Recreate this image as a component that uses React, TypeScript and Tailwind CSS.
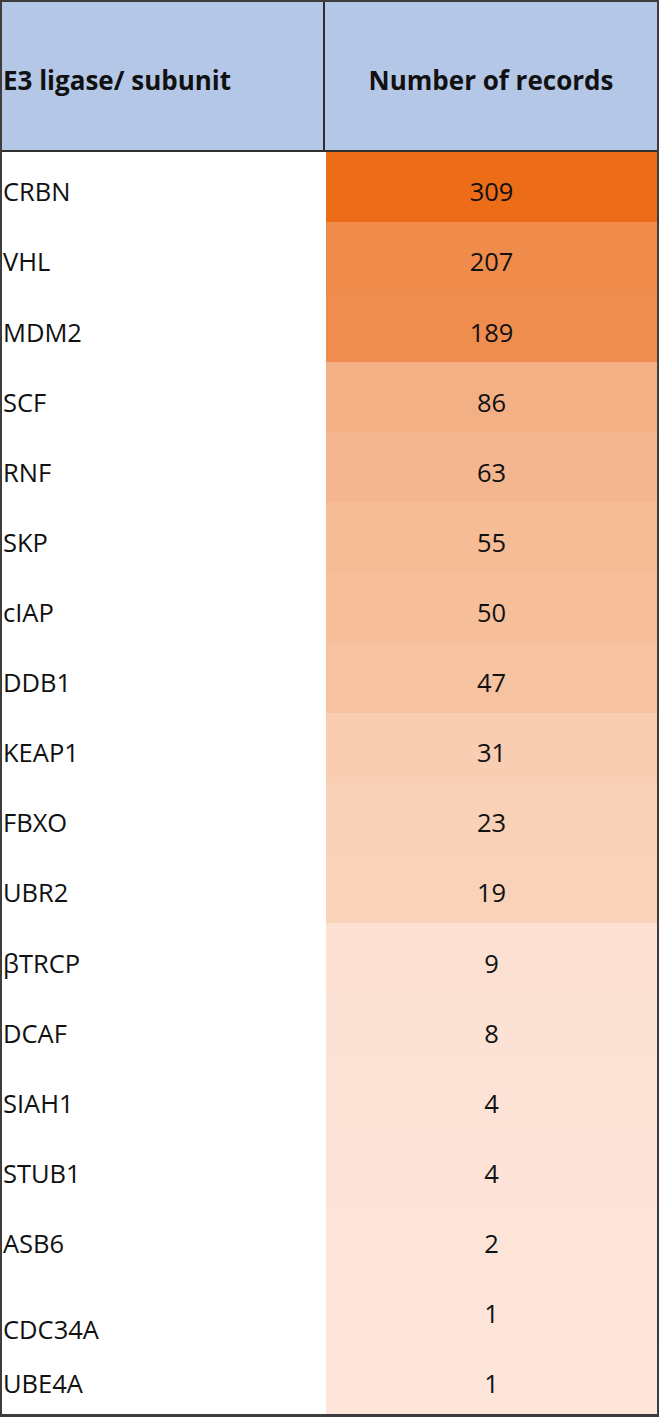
const rows: { name: string; count: number; bg: string }[] = [
  { name: "CRBN", count: 309, bg: "bg-[#ec6c17]" },
  { name: "VHL", count: 207, bg: "bg-[#ef8b4b]" },
  { name: "MDM2", count: 189, bg: "bg-[#ef8d4e]" },
  { name: "SCF", count: 86, bg: "bg-[#f3b085]" },
  { name: "RNF", count: 63, bg: "bg-[#f4b68e]" },
  { name: "SKP", count: 55, bg: "bg-[#f5bc96]" },
  { name: "cIAP", count: 50, bg: "bg-[#f6bf9a]" },
  { name: "DDB1", count: 47, bg: "bg-[#f6c29f]" },
  { name: "KEAP1", count: 31, bg: "bg-[#f8cdb1]" },
  { name: "FBXO", count: 23, bg: "bg-[#f9d1b6]" },
  { name: "UBR2", count: 19, bg: "bg-[#f9d3b9]" },
  { name: "βTRCP", count: 9, bg: "bg-[#fce1d3]" },
  { name: "DCAF", count: 8, bg: "bg-[#fce2d5]" },
  { name: "SIAH1", count: 4, bg: "bg-[#fce3d6]" },
  { name: "STUB1", count: 4, bg: "bg-[#fde3d7]" },
  { name: "ASB6", count: 2, bg: "bg-[#fde4d8]" },
  { name: "CDC34A", count: 1, bg: "bg-[#fde4d9]" },
  { name: "UBE4A", count: 1, bg: "bg-[#fde5da]" },
];

export default function App() {
  return (
    <div
      className="w-[659px] h-[1417px] bg-white text-[#111] border-2 border-b-[3px] border-[#3d3d3d] flex flex-col text-[25.5px] leading-none"
      style={{ fontFamily: '"Open Sans", "Noto Sans", sans-serif' }}
    >
      {/* HEADER */}
      <div className="h-[150px] shrink-0 flex bg-[#b4c7e7] border-b-2 border-[#2f2f2f] font-bold text-[26px]">
        <div className="w-[323px] flex items-center pl-[1px] pt-[8px] border-r-2 border-[#2f2f2f]">
          E3 ligase/ subunit
        </div>
        <div className="flex-1 flex items-center justify-center pt-[8px]">
          Number of records
        </div>
      </div>

      {/* BODY */}
      <div className="flex-1 grid grid-rows-[repeat(18,minmax(0,1fr))]">
        {rows.map((r) => (
          <div key={r.name} className="flex">
            <div
              className={`w-[324px] flex items-center pl-[1px] ${
                r.name === "CDC34A" ? "pt-[42px]" : "pt-[10px]"
              }`}
            >
              {r.name}
            </div>
            <div className={`flex-1 flex items-center justify-center pt-[10px] ${r.bg}`}>
              {r.count}
            </div>
          </div>
        ))}
      </div>
    </div>
  );
}
